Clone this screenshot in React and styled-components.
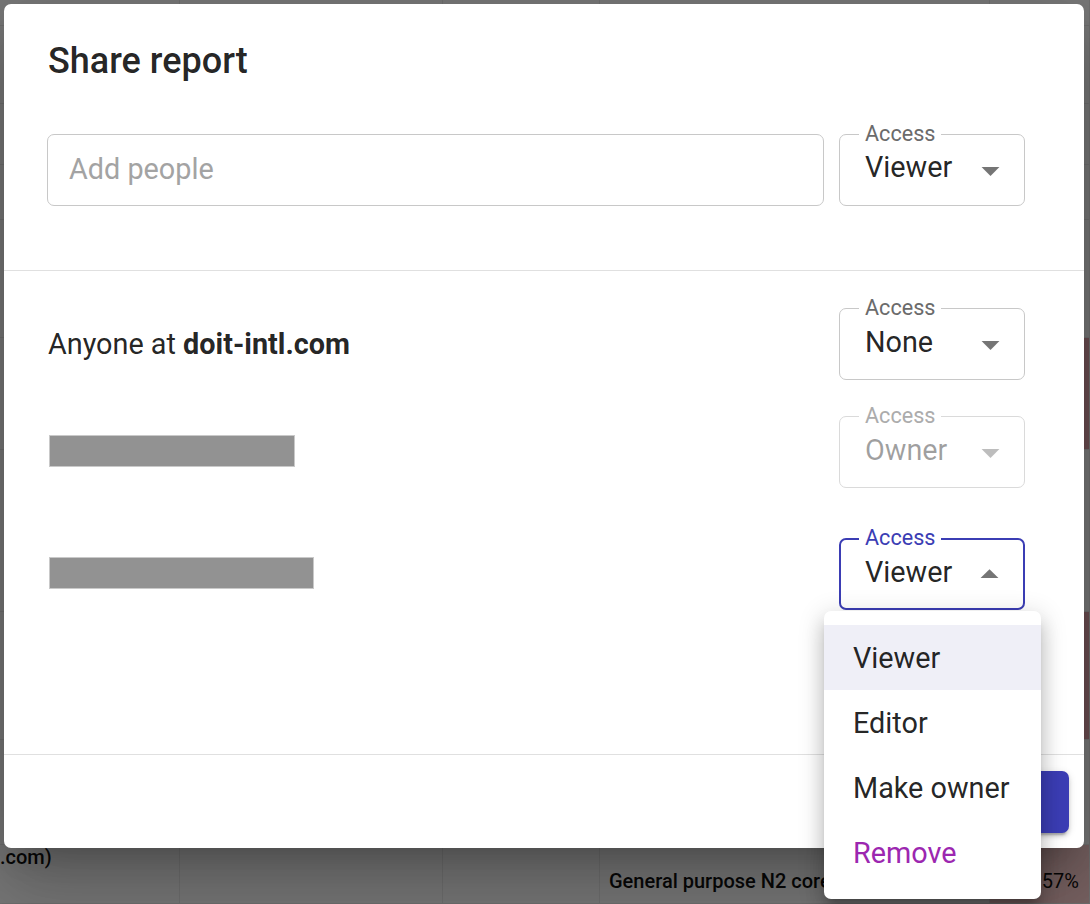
import React from "react"
import styled, { createGlobalStyle, css } from "styled-components"

const GlobalStyle = createGlobalStyle`
  html, body {
    margin: 0;
    padding: 0;
    font-family: Roboto, "Liberation Sans", sans-serif;
    -webkit-font-smoothing: antialiased;
  }
`

const PRIMARY = "#3b3db4"

const Page = styled.div`
  position: relative;
  width: 1090px;
  height: 904px;
  overflow: hidden;
  background: #f1f1f1;
`

// the report page under the dimmed backdrop
const BgTable = styled.div`
  display: grid;
  grid-template-columns: 180px 263px 157px 390px 100px;
  grid-template-rows: 26px 78px 61px 55px 118px 112px 162px 128px 105px 59px;
  height: 904px;
`

const BgCell = styled.div`
  box-sizing: border-box;
  border-right: 1px solid #dedede;
  border-bottom: 1px solid #dedede;
  font-size: 20px;
  font-weight: 500;
  color: #111;
  white-space: nowrap;
  overflow: hidden;
  display: flex;
  align-items: ${p => (p.$low ? "flex-end" : "flex-start")};
  padding: ${p => (p.$low ? "0 0 10px 9px" : "0")};
  background: ${p =>
    p.$tone === "red" ? "#d69aa2" : p.$tone === "pink" ? "#f1c4c4" : "transparent"};
  ${p =>
    p.$right &&
    css`
      align-items: flex-end;
      justify-content: flex-end;
      padding: 0 10px 10px 0;
      font-weight: 400;
    `}
`

const Backdrop = styled.div`
  position: absolute;
  inset: 0;
  background: rgba(0, 0, 0, 0.5);
`

const Dialog = styled.div`
  position: absolute;
  left: 4px;
  top: 4px;
  width: 1080px;
  height: 844px;
  background: #fff;
  border-radius: 7px;
  display: flex;
  flex-direction: column;
  box-shadow: 0 20px 27px -13px rgba(0, 0, 0, 0.2),
    0 43px 68px 5px rgba(0, 0, 0, 0.14), 0 16px 83px 14px rgba(0, 0, 0, 0.12);
`

const Header = styled.div`
  box-sizing: border-box;
  height: 267px;
  padding: 29px 59px 0 43px;
  border-bottom: 1px solid #e0e0e0;
  flex: 0 0 auto;
`

const Title = styled.h2`
  margin: 0 0 0 1px;
  font-size: 36px;
  line-height: 57.6px;
  font-weight: 500;
  color: rgba(0, 0, 0, 0.87);
`

const InviteRow = styled.div`
  display: flex;
  gap: 15px;
  margin-top: 43px;
`

const PeopleInput = styled.input`
  flex: 1;
  height: 72px;
  box-sizing: border-box;
  border: 1px solid #c8c8c8;
  border-radius: 7px;
  padding: 0 21px 2px;
  font-family: inherit;
  font-size: 28.8px;
  color: rgba(0, 0, 0, 0.87);
  outline: none;
  &::placeholder {
    color: #a3a3a3;
  }
`

const Members = styled.div`
  flex: 1;
  padding: 0 59px 0 44px;
  border-bottom: 1px solid #e0e0e0;
`

const MemberRow = styled.div`
  display: flex;
  align-items: center;
  justify-content: space-between;
  margin-top: ${p => p.$gap}px;
`

const Domain = styled.span`
  font-size: 28.8px;
  color: rgba(0, 0, 0, 0.87);
  b {
    font-weight: 700;
  }
`

const Redacted = styled.div`
  width: ${p => p.$width}px;
  height: 32px;
  margin-left: 1px;
  margin-top: -2px;
  background: #929292;
  border: 1px solid #c9c9c9;
  box-sizing: border-box;
`

const SelectBox = styled.div`
  position: relative;
  width: 186px;
  height: 72px;
  box-sizing: border-box;
  border-radius: 7px;
  border: 1px solid ${p => (p.$disabled ? "#dadada" : "#c8c8c8")};
  display: flex;
  align-items: center;
  padding: 0 0 5px 25px;
  ${p =>
    p.$focused &&
    css`
      border: 2px solid ${PRIMARY};
      padding-left: 24px;
    `}
`

const SelectLabel = styled.span`
  position: absolute;
  top: -13px;
  left: 19px;
  padding: 0 6px;
  background: #fff;
  font-size: 21.6px;
  line-height: 24px;
  color: ${p => (p.$focused ? PRIMARY : p.$disabled ? "#acacac" : "#6b6b6b")};
  ${p =>
    p.$focused &&
    css`
      top: -14px;
      left: 18px;
    `}
`

const SelectValue = styled.span`
  font-size: 28.8px;
  color: ${p => (p.$disabled ? "rgba(0,0,0,0.38)" : "rgba(0,0,0,0.87)")};
`

const Arrow = styled.svg`
  position: absolute;
  right: 12px;
  top: 50%;
  width: 43px;
  height: 43px;
  margin-top: -21px;
  fill: ${p => (p.$disabled ? "rgba(0,0,0,0.26)" : "rgba(0,0,0,0.54)")};
  transform: ${p => (p.$open ? "rotate(180deg)" : "none")};
`

const Footer = styled.div`
  display: flex;
  justify-content: flex-end;
  padding: 16px 15px 15px;
`

const PrimaryButton = styled.button`
  height: 62px;
  width: 130px;
  border: none;
  border-radius: 7px;
  background: ${PRIMARY};
  box-shadow: 0 5px 2px -3px rgba(0, 0, 0, 0.2), 0 3px 4px 0 rgba(0, 0, 0, 0.14),
    0 2px 9px 0 rgba(0, 0, 0, 0.12);
`

const Menu = styled.ul`
  position: absolute;
  left: 824px;
  top: 611px;
  width: 217px;
  margin: 0;
  padding: 14px 0;
  list-style: none;
  background: #fff;
  border-radius: 7px;
  box-shadow: 0 9px 9px -5px rgba(0, 0, 0, 0.2), 0 14px 18px 2px rgba(0, 0, 0, 0.14),
    0 5px 25px 4px rgba(0, 0, 0, 0.12);
`

const MenuItem = styled.li`
  height: 65px;
  display: flex;
  align-items: center;
  padding: 0 29px;
  font-size: 28.8px;
  color: ${p => (p.$danger ? "#9c27b0" : "rgba(0,0,0,0.87)")};
  background: ${p => (p.$selected ? "#efeff7" : "transparent")};
`

const AccessSelect = ({ value, disabled, focused }) => (
  <SelectBox $disabled={disabled} $focused={focused}>
    <SelectLabel $disabled={disabled} $focused={focused}>
      Access
    </SelectLabel>
    <SelectValue $disabled={disabled}>{value}</SelectValue>
    <Arrow viewBox="0 0 24 24" $disabled={disabled} $open={focused}>
      <path d="M7 10l5 5 5-5z" />
    </Arrow>
  </SelectBox>
)

const bgRows = [
  ["", "", "", "", ""],
  ["", "", "", "", ""],
  ["", "", "", "", ""],
  ["", "", "", "", ""],
  ["", "", "", "", ""],
  ["", "", "", "", "red"],
  ["", "", "", "", ""],
  ["", "", "", "", "red"],
  ["", "", "", "", ""],
]

export default function App() {
  return (
    <Page>
      <GlobalStyle />
      <BgTable>
        {bgRows.map((row, i) =>
          row.map((tone, j) => <BgCell key={`${i}-${j}`} $tone={tone} />)
        )}
        <BgCell>.com)</BgCell>
        <BgCell />
        <BgCell />
        <BgCell $low>General purpose N2 core</BgCell>
        <BgCell $tone="pink" $right>
          57%
        </BgCell>
      </BgTable>
      <Backdrop />

      <Dialog>
        <Header>
          <Title>Share report</Title>
          <InviteRow>
            <PeopleInput placeholder="Add people" />
            <AccessSelect value="Viewer" />
          </InviteRow>
        </Header>

        <Members>
          <MemberRow $gap={37}>
            <Domain>
              Anyone at <b>doit-intl.com</b>
            </Domain>
            <AccessSelect value="None" />
          </MemberRow>
          <MemberRow $gap={36}>
            <Redacted $width={246} />
            <AccessSelect value="Owner" disabled />
          </MemberRow>
          <MemberRow $gap={50}>
            <Redacted $width={265} />
            <AccessSelect value="Viewer" focused />
          </MemberRow>
        </Members>

        <Footer>
          <PrimaryButton aria-label="Share" />
        </Footer>
      </Dialog>

      <Menu>
        <MenuItem $selected>Viewer</MenuItem>
        <MenuItem>Editor</MenuItem>
        <MenuItem>Make owner</MenuItem>
        <MenuItem $danger>Remove</MenuItem>
      </Menu>
    </Page>
  )
}
